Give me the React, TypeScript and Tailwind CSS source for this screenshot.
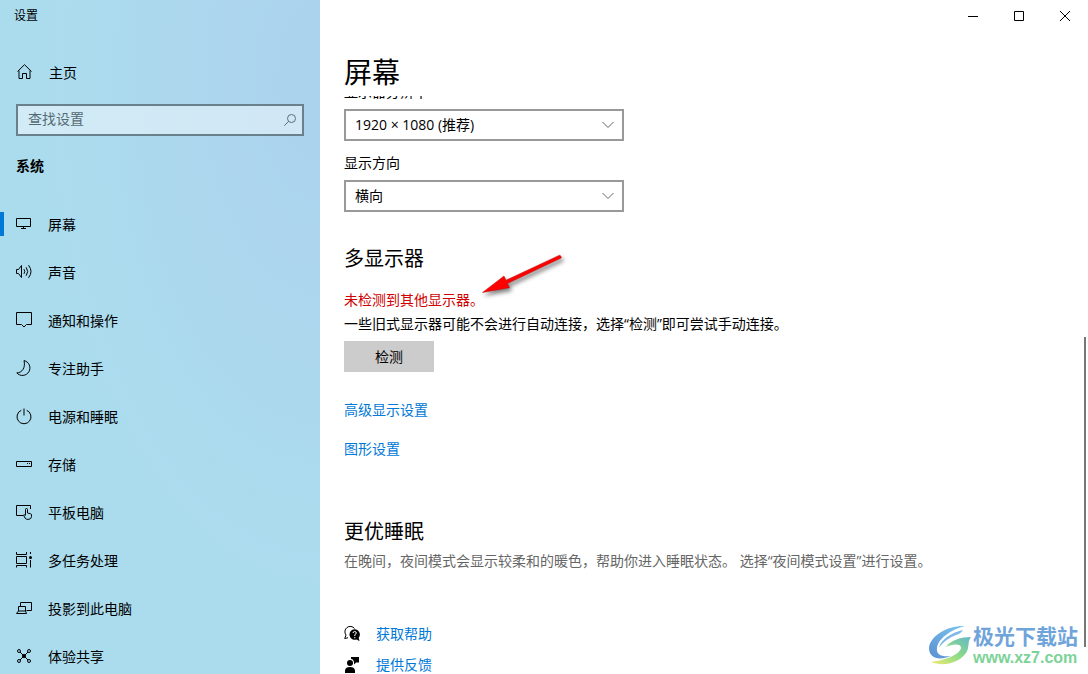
import React, { useState } from 'react';

type IconProps = { children: React.ReactNode };

const Icon = ({ children }: IconProps) => (
    <svg viewBox="0 0 16 16" className="w-4 h-4 shrink-0 overflow-visible" fill="none" stroke="currentColor" strokeWidth="1" aria-hidden="true">
        {children}
    </svg>
);

const navItems = [
    { label: '屏幕', icon: <Icon><path d="M.5 2.5h14v8H.5zM7.5 10.5v2M5 12.5h5" /></Icon> },
    { label: '声音', icon: <Icon><path d="M.5 5.5h2l3-4v12l-3-4h-2zM8 5.2q1.500 2.300 0 4.600M10.200 3.300q3 4.200 0 8.400M12.500 1.200q5 6.300 0 12.600" /></Icon> },
    { label: '通知和操作', icon: <Icon><path d="M.5.5h15v12h-5L8 15l-2.500-2.500h-5z" /></Icon> },
    { label: '专注助手', icon: <Icon><path d="M8 .6a7.500 7.500 0 1 1-7.200 12.300C6 13 9.800 7.500 8 .6z" /></Icon> },
    { label: '电源和睡眠', icon: <Icon><path d="M8 .5v7M5.300 2.300a7 7 0 1 0 5.400 0" /></Icon> },
    { label: '存储', icon: <Icon><path d="M.5 5.500h15v5H.5zM11 7.500h1M13 7.500h1" /></Icon> },
    { label: '平板电脑', icon: <Icon><path d="M7 11.500H.5V1.500h14V5M9.500 11V5.500a1 1 0 0 1 2 0V9l3 .700q1 .300 1 1.300v1.500a3.500 3 0 0 1-6.500 1.500L7.500 11q1-.7 2 .5" /></Icon> },
    { label: '多任务处理', icon: <Icon><path d="M.5 0v2.500h10V0M.5 4.500h10v7H.5zM.5 15.500v-2h10v2M14.500 0v2M14.500 8v7.500" /><circle cx="14.500" cy="5.500" r="1.500" fill="currentColor" stroke="none" /></Icon> },
    { label: '投影到此电脑', icon: <Icon><path d="M4.500 6V2.500h11v8h-5M2.500 11V6.500h7V11M.5 13.500h10l-1-2.500h-7l-2 2.500" /></Icon> },
    { label: '体验共享', icon: <Icon><path d="M4 4l8 8M12 4l-8 8" /><circle cx="3" cy="3" r="1.500" /><circle cx="13" cy="3" r="1.500" /><circle cx="3" cy="13" r="1.500" /><circle cx="13" cy="13" r="1.500" /><circle cx="8" cy="8" r="1.500" fill="currentColor" /></Icon> },
];

const SelectField = ({ id, label, options }: { id: string; label: string; options: string[] }) => (
    <div>
        <label htmlFor={id} className="block mb-[7px] text-sm leading-5">{label}</label>
        <div className="relative w-[280px] max-w-full">
            <select id={id} className="block w-full h-8 pl-[9px] pr-8 appearance-none border-2 border-[#999] bg-white text-sm outline-none">
                {options.map(o => <option key={o}>{o}</option>)}
            </select>
            <svg viewBox="0 0 12 8" className="absolute right-[10px] top-3 w-3 h-2 pointer-events-none" fill="none" stroke="#666" aria-hidden="true">
                <path d="M.5 1L6 6.500 11.500 1" />
            </svg>
        </div>
    </div>
);

const Sidebar = () => {
    const [active, setActive] = useState('屏幕');
    const [query, setQuery] = useState('');

    return (
        <aside className="w-80 shrink-0 overflow-hidden bg-[radial-gradient(ellipse_280px_520px_at_100%_12%,#abd2ee_0%,#acd7ed_50%,#abdcee_100%)]">
            <div className="h-8 pl-[14px] text-xs leading-8">设置</div>

            <a href="#home" className="flex items-center gap-4 h-12 mt-4 pl-[17px] text-sm leading-5">
                <Icon><path d="M.5 7.500L7.500.700l7 6.800M2 6.500v8h3.500v-5h4v5H13v-8" /></Icon>
                <span className="pt-0.5">主页</span>
            </a>

            <div className="relative mx-4 mt-2">
                <input
                    type="text"
                    aria-label="查找设置"
                    placeholder="查找设置"
                    value={query}
                    onChange={e => setQuery(e.target.value)}
                    className="block w-full h-8 pl-[10px] pr-8 pb-1 border-2 border-[#69818b] bg-white/45 text-sm outline-none placeholder:text-[#566a73]"
                />
                <svg viewBox="0 0 12 12" className="absolute right-2 top-[10px] w-3 h-3" fill="none" stroke="#5b6d76" aria-hidden="true">
                    <circle cx="7.500" cy="4.500" r="4" />
                    <path d="M4.700 7.300L.3 11.700" />
                </svg>
            </div>

            <h2 className="mt-5 pl-4 text-sm leading-5 font-bold">系统</h2>

            <nav className="mt-6">
                {navItems.map(item => (
                    <button
                        key={item.label}
                        type="button"
                        onClick={() => setActive(item.label)}
                        className="relative flex items-center gap-4 w-full h-12 pl-4 text-sm leading-5 text-left"
                    >
                        {active === item.label && <span className="absolute left-0 top-3 w-1 h-6 bg-[#0078d7]" />}
                        {item.icon}
                        <span className="pt-0.5">{item.label}</span>
                    </button>
                ))}
            </nav>
        </aside>
    );
};

const WindowControls = () => (
    <div className="flex justify-end h-8">
        <button type="button" aria-label="最小化" className="grid place-items-center w-[46px] h-8">
            <svg viewBox="0 0 10 10" className="w-[10px] h-[10px]" stroke="currentColor"><path d="M0 5.500h10" /></svg>
        </button>
        <button type="button" aria-label="最大化" className="grid place-items-center w-[46px] h-8">
            <svg viewBox="0 0 10 10" className="w-[10px] h-[10px]" fill="none" stroke="currentColor"><path d="M.5.5h9v9h-9z" /></svg>
        </button>
        <button type="button" aria-label="关闭" className="grid place-items-center w-[46px] h-8">
            <svg viewBox="0 0 10 10" className="w-[10px] h-[10px]" stroke="currentColor"><path d="M0 0l10 10M10 0L0 10" /></svg>
        </button>
    </div>
);

// Red pointer next to the "no display detected" message
const PointerArrow = () => (
    <svg viewBox="0 0 90 50" className="absolute left-[136px] -top-10 w-[90px] h-[50px] overflow-visible" aria-hidden="true">
        <g className="drop-shadow-[2px_3px_2px_rgba(0,0,0,0.5)]">
            <path d="M2.500 42.500L24 26l2 4.200L79.500 5.200q2 .3 1.700 2.800L27.500 33.500l2 4.200z" fill="#ff0000" stroke="#b01010" strokeWidth=".5" />
        </g>
    </svg>
);

const Watermark = () => (
    <div className="absolute right-[10px] bottom-1.5 flex items-center gap-px pointer-events-none">
        <svg viewBox="0 0 43 42" className="w-[43px] h-[42px]" aria-hidden="true">
            <defs>
                <linearGradient id="swirlBlue" x1="0" y1="1" x2="1" y2="0">
                    <stop offset="0" stopColor="#5b8fd2" />
                    <stop offset="1" stopColor="#7cc8ee" />
                </linearGradient>
                <linearGradient id="swirlGreen" x1="0" y1="1" x2="1" y2="0">
                    <stop offset="0" stopColor="#f1ea72" />
                    <stop offset=".5" stopColor="#8edb86" />
                    <stop offset="1" stopColor="#62b8c8" />
                </linearGradient>
            </defs>
            <path d="M36 1C20 0 1 10 0 23c0 10 10 13 22 8-9 1-15-1-14-8C9 14 21 5 36 1z" fill="url(#swirlBlue)" />
            <path d="M34 5C22 8 12 14 10 23c4-6 11-11 17-13 3-1 5-2 7-5z" fill="#7db9e8" />
            <path d="M42 12c-10 0-20 3-25 10 6-3 15-4 15 1-1 6-14 12-30 14 12 5 28 1 35-9 4-6 1-11 5-16z" fill="url(#swirlGreen)" />
        </svg>
        <div className="font-bold">
            <div className="text-[21px] leading-6 text-[#6fa4da]">极光下载站</div>
            <div className="font-['Liberation_Sans',sans-serif] text-base leading-5 text-[#7bd397]">www.xz7.com</div>
        </div>
    </div>
);

export default function App() {
    return (
        <div lang="zh-CN" className="flex h-screen overflow-hidden bg-white text-black font-['Open_Sans','Noto_Sans_CJK_SC',sans-serif]">
            <Sidebar />

            <main className="relative flex-1 min-w-0 flex flex-col">
                <WindowControls />
                <h1 className="h-16 pl-6 pt-5 text-[28px] leading-10">屏幕</h1>

                <div className="flex-1 min-h-0 overflow-hidden pl-6 pr-8">
                    {/* list is scrolled, the first label is half under the title */}
                    <div className="-mt-3.5 space-y-3">
                        <SelectField id="resolution" label="显示器分辨率" options={['1920 × 1080 (推荐)', '1680 × 1050', '1280 × 720']} />
                        <SelectField id="orientation" label="显示方向" options={['横向', '纵向']} />
                    </div>

                    <section className="mt-[33px] text-sm leading-5">
                        <h2 className="text-xl leading-7">多显示器</h2>
                        <div className="relative mt-[17px]">
                            <p className="text-[#d00000]">未检测到其他显示器。</p>
                            <PointerArrow />
                        </div>
                        <p className="mt-1">一些旧式显示器可能不会进行自动连接，选择“检测”即可尝试手动连接。</p>
                        <button type="button" className="block mt-[7px] w-[90px] h-[31px] bg-[#ccc]">检测</button>
                        <a href="#advanced" className="block w-fit mt-7 text-[#0078d7]">高级显示设置</a>
                        <a href="#graphics" className="block w-fit mt-[19px] text-[#0078d7]">图形设置</a>
                    </section>

                    <section className="mt-[59px] text-sm leading-5">
                        <h2 className="text-xl leading-7">更优睡眠</h2>
                        <p className="mt-[5px] text-[#666]">在晚间，夜间模式会显示较柔和的暖色，帮助你进入睡眠状态。 选择“夜间模式设置”进行设置。</p>
                    </section>

                    <div className="mt-[53px] space-y-[11px] text-sm leading-5">
                        <a href="#help" className="flex items-center gap-4 w-fit text-[#0078d7]">
                            <svg viewBox="0 0 16 16" className="w-4 h-4 text-black" fill="none" stroke="currentColor" aria-hidden="true">
                                <path d="M2 9L.7 12.500l3.300-.8M2 9A5 5 0 1 1 10.500 2.500" />
                                <path d="M10.500 3.200a5.300 5.300 0 1 0 2.300 10.200l2.700 1.800-.8-3.400a5.300 5.300 0 0 0-4.200-8.600z" fill="currentColor" stroke="none" />
                                <path d="M9 7q.2-1.500 1.700-1.500T12.300 7q0 .9-1.500 1.700V10M10.800 11v1.300" stroke="#fff" />
                            </svg>
                            获取帮助
                        </a>
                        <a href="#feedback" className="flex items-center gap-4 w-fit text-[#0078d7]">
                            <svg viewBox="0 0 16 16" className="w-4 h-4 text-black" fill="currentColor" aria-hidden="true">
                                <circle cx="6" cy="6" r="3" />
                                <path d="M7 0h8v5.500h-3l-2 2V5A4 4 0 0 0 7 1.800z" />
                                <path d="M1 16v-2q0-4 5-4t5 4v2z" />
                            </svg>
                            提供反馈
                        </a>
                    </div>
                </div>

                <div className="absolute right-[2px] top-1/2 w-[2px] h-[310px] bg-[#767676]" />
                <Watermark />
            </main>
        </div>
    );
}
